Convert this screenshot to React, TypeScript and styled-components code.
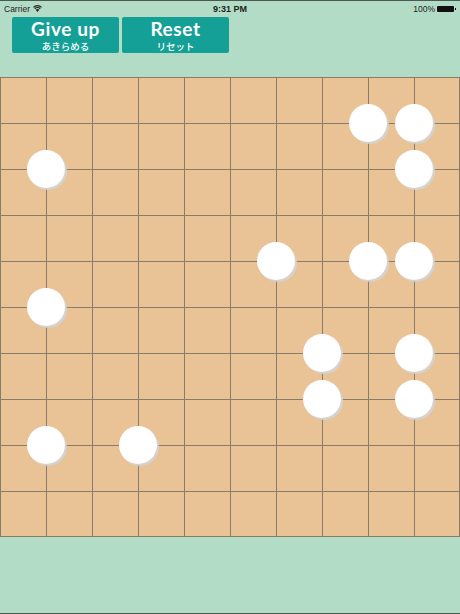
import React from "react";
import styled, { createGlobalStyle } from "styled-components";

const Global = createGlobalStyle`
  html, body { margin: 0; padding: 0; }
  body { background: #b2dcc5; }
  #root { width: 460px; height: 614px; }
`;

const Screen = styled.div`
  width: 460px;
  height: 614px;
  box-sizing: border-box;
  background: #b2dcc5;
  border-top: 1px solid #4a5a52;
  border-bottom: 1px solid #4a5a52;
  display: flex;
  flex-direction: column;
  overflow: hidden;
`;

const StatusBar = styled.div`
  height: 15px;
  display: grid;
  grid-template-columns: 1fr auto 1fr;
  align-items: center;
  padding: 0 4px;
  font-family: "Liberation Sans", Arial, sans-serif;
  font-size: 8.5px;
  color: #222;
`;

const StatusLeft = styled.div`
  display: flex;
  align-items: center;
  gap: 3px;
`;

const StatusCenter = styled.div`
  font-weight: 700;
  font-size: 9px;
`;

const StatusRight = styled.div`
  display: flex;
  justify-content: flex-end;
  align-items: center;
  gap: 2px;
`;

const Battery = styled.div`
  width: 17px;
  height: 6px;
  background: #111;
  border-radius: 1px;
  position: relative;
  margin-right: 2px;
  &::after {
    content: "";
    position: absolute;
    right: -2px;
    top: 2px;
    width: 1.5px;
    height: 2px;
    background: #111;
  }
`;

const Toolbar = styled.div`
  display: flex;
  gap: 3px;
  padding: 1px 0 0 12px;
  height: 61px;
  box-sizing: border-box;
`;

const ActionButton = styled.button`
  width: 107px;
  height: 36px;
  border: none;
  border-radius: 2px;
  background: #14a097;
  color: #fff;
  padding: 0;
  display: flex;
  flex-direction: column;
  align-items: center;
  justify-content: flex-start;
  cursor: pointer;
  overflow: visible;
`;

const Title = styled.span`
  font-family: "Lato", "Open Sans", sans-serif;
  font-weight: 700;
  font-size: 19px;
  line-height: 23px;
  letter-spacing: 0.6px;
`;

const Sub = styled.span`
  font-family: "Noto Sans CJK JP", sans-serif;
  font-size: 9.5px;
  line-height: 14px;
  font-weight: 500;
  margin-top: -1px;
`;

const Board = styled.div`
  position: relative;
  width: 460px;
  height: 460px;
  background: #e9c296;
  display: grid;
  grid-template-columns: repeat(10, 46px);
  grid-template-rows: repeat(10, 46px);
`;

const Cell = styled.div<{ $lastCol: boolean; $lastRow: boolean }>`
  box-sizing: border-box;
  border-left: 1.5px solid #8a7c6a;
  border-top: 1.5px solid #8a7c6a;
  border-right: ${(p) => (p.$lastCol ? "1.5px solid #8a7c6a" : "none")};
  border-bottom: ${(p) => (p.$lastRow ? "1.5px solid #8a7c6a" : "none")};
`;

const Stone = styled.div`
  position: absolute;
  width: 38px;
  height: 38px;
  border-radius: 50%;
  background: radial-gradient(circle at 45% 40%, #ffffff 70%, #f7f7f7 100%);
  box-shadow: 2px 2px 1px #d3d3d3;
  transform: translate(-19px, -19px);
`;

const stones: [number, number][] = [
  [8, 1], [9, 1], [1, 2], [9, 2], [6, 4], [8, 4], [9, 4], [1, 5],
  [7, 6], [9, 6], [7, 7], [9, 7], [1, 8], [3, 8],
];

const Wifi = () => (
  <svg width="9" height="7" viewBox="0 0 12 9">
    <path d="M6 9 L3.6 6.2 A3.6 3.6 0 0 1 8.4 6.2 Z" fill="#222" />
    <path d="M1.8 4.3 A6 6 0 0 1 10.2 4.3 L9.1 5.5 A4.4 4.4 0 0 0 2.9 5.5 Z" fill="#222" />
    <path d="M0 2.4 A8.6 8.6 0 0 1 12 2.4 L10.9 3.6 A7 7 0 0 0 1.1 3.6 Z" fill="#222" />
  </svg>
);

export default function App() {
  const cells = [];
  for (let r = 0; r < 10; r++) {
    for (let c = 0; c < 10; c++) {
      cells.push(<Cell key={`${r}-${c}`} $lastCol={c === 9} $lastRow={r === 9} />);
    }
  }
  return (
    <>
      <Global />
      <Screen>
        <StatusBar>
          <StatusLeft>
            <span>Carrier</span>
            <Wifi />
          </StatusLeft>
          <StatusCenter>9:31 PM</StatusCenter>
          <StatusRight>
            <span>100%</span>
            <Battery />
          </StatusRight>
        </StatusBar>
        <Toolbar>
          <ActionButton>
            <Title>Give up</Title>
            <Sub>あきらめる</Sub>
          </ActionButton>
          <ActionButton>
            <Title>Reset</Title>
            <Sub>リセット</Sub>
          </ActionButton>
        </Toolbar>
        <Board>
          {cells}
          {stones.map(([c, r]) => (
            <Stone key={`${c}-${r}`} style={{ left: c * 46, top: r * 46 }} />
          ))}
        </Board>
      </Screen>
    </>
  );
}
